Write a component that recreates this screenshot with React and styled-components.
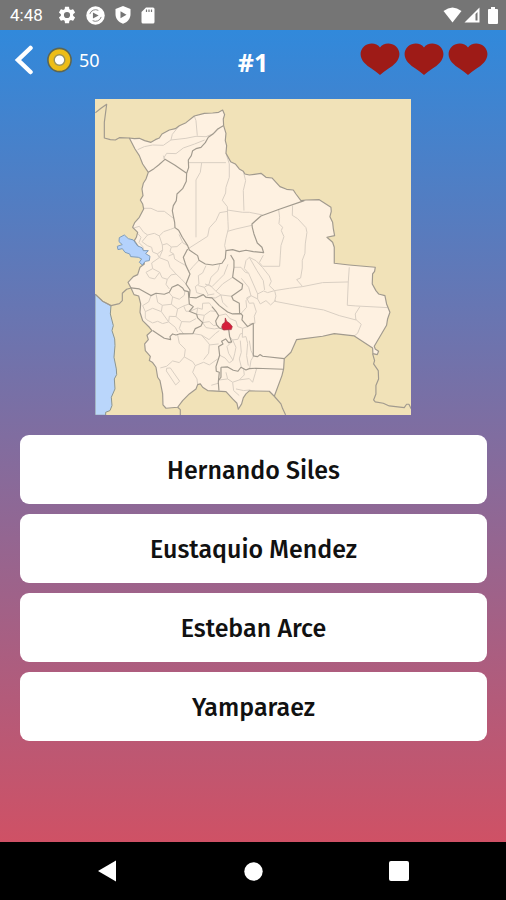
import React from "react";
import styled, { createGlobalStyle } from "styled-components";

const GlobalStyle = createGlobalStyle`
  *, *::before, *::after { box-sizing: border-box; }
  body { margin: 0; font-family: "Noto Sans", "Open Sans", sans-serif; }
  button { font: inherit; border: 0; padding: 0; background: none; cursor: pointer; }
  svg { display: block; }
`;

const Screen = styled.div`
  min-height: 100vh;
  display: flex;
  flex-direction: column;
  background: #000;
`;

const StatusBar = styled.header`
  height: 30px;
  padding: 0 8px 0 10px;
  display: flex;
  align-items: center;
  justify-content: space-between;
  background: #757575;
  color: #fff;
`;

const StatusGroup = styled.div`
  display: flex;
  align-items: center;
  gap: ${(p) => p.$gap}px;
`;

const Clock = styled.time`
  font: 400 17px/20px Roboto, sans-serif;
  margin-right: 5px;
`;

const Game = styled.main`
  flex: 1;
  display: flex;
  flex-direction: column;
  background: linear-gradient(#3189db, #cf5165);
`;

const TopBar = styled.div`
  height: 60px;
  padding: 0 14px;
  display: grid;
  grid-template-columns: 1fr auto 1fr;
  align-items: center;
  color: #fff;
`;

const Wallet = styled.div`
  display: flex;
  align-items: center;
  gap: 14px;
`;

const BackButton = styled.button`
  color: #fff;
`;

const Coins = styled.span`
  display: flex;
  align-items: center;
  gap: 7px;
  font-size: 18px;
  line-height: 24px;
`;

const Level = styled.h1`
  margin: 0;
  padding-top: 3px;
  font-size: 25px;
  line-height: 32px;
  font-weight: 700;
`;

const Lives = styled.div`
  display: flex;
  justify-content: flex-end;
  gap: 4px;
  padding: 0 4px 2px 0;
`;

const MapFrame = styled.figure`
  width: 62.5%;
  margin: 9px auto 20px;

  svg { width: 100%; height: auto; }
`;

const Answers = styled.div`
  display: grid;
  gap: 10px;
  padding: 0 19px 100px 20px;
`;

const Answer = styled.button`
  && {
    height: 69px;
    padding-top: 3px;
    border-radius: 9px;
    background: #fff;
    color: #111;
    font: 500 25px/32px "Fira Sans", "Noto Sans", sans-serif;
  }
`;

const NavBar = styled.nav`
  height: 58px;
  padding: 0 34px;
  display: grid;
  grid-template-columns: repeat(3, 1fr);
  background: #000;
`;

const NavButton = styled.button`
  && {
    display: grid;
    place-items: center;
    color: #fff;
  }
`;

const Heart = () => (
  <svg width="40" height="33" viewBox="0 0 40 33" aria-hidden="true">
    <path fill="#9e1b17" d="M20 4.500C17-.2 9-.9 4.200 3.200C-.7 7.500-.5 14.500 4 19.500C8.500 24.500 15 27.300 20 32C25 27.300 31.500 24.500 36 19.500C40.500 14.500 40.700 7.500 35.800 3.200C31-.9 23-.2 20 4.500Z" />
  </svg>
);

const Coin = () => (
  <svg width="25" height="26" viewBox="0 0 25 26" aria-hidden="true">
    <circle cx="12.500" cy="13" r="11.600" fill="#edbd17" stroke="#5c6654" strokeWidth="1.600" />
    <circle cx="12.500" cy="13" r="5.300" fill="#fff" stroke="#98925c" strokeWidth="1.400" />
  </svg>
);

const Gear = () => (
  <svg width="18" height="18" viewBox="1.500 1.500 21 21" fill="currentColor" aria-hidden="true">
    <path d="M19.140 12.940c.04-.3.060-.61.060-.94s-.02-.64-.07-.94l2.030-1.580a.49.49 0 0 0 .12-.61l-1.920-3.320a.49.49 0 0 0-.59-.22l-2.390.96a7 7 0 0 0-1.620-.94l-.36-2.540A.48.48 0 0 0 13.920 2.400h-3.840c-.24 0-.43.170-.47.410l-.36 2.540c-.59.240-1.130.57-1.620.94l-2.390-.96a.48.48 0 0 0-.59.220L2.740 8.870a.48.48 0 0 0 .12.610l2.030 1.580a7 7 0 0 0 0 1.880l-2.030 1.580a.49.49 0 0 0-.12.610l1.920 3.320c.12.220.37.290.59.220l2.390-.96c.5.380 1.030.7 1.620.94l.36 2.540c.05.240.24.410.48.410h3.840c.24 0 .44-.17.470-.41l.36-2.540a7 7 0 0 0 1.620-.94l2.390.96c.22.080.47 0 .59-.22l1.920-3.320a.48.48 0 0 0-.12-.61zM12 15.600a3.600 3.600 0 1 1 0-7.200 3.600 3.600 0 0 1 0 7.200z" />
  </svg>
);

const PlayDisc = () => (
  <svg width="19" height="19" viewBox="0 0 20 20" aria-hidden="true">
    <circle cx="10" cy="10" r="9.700" fill="#fff" />
    <path d="M4 8.500A6.300 6.300 0 0 1 13 4.600M16 11.500A6.300 6.300 0 0 1 7 15.400" fill="none" stroke="#858585" strokeWidth="1" />
    <path d="M7.300 6.800L13.300 10L7.300 13.200Z" fill="#757575" />
  </svg>
);

const Shield = () => (
  <svg width="16" height="18" viewBox="0 0 16 18" aria-hidden="true">
    <path d="M8 0L15.500 3V8C15.500 12.600 12.600 16.200 8 17.700C3.400 16.200.5 12.600.5 8V3Z" fill="#fff" />
    <path d="M5.500 5.200L11.500 8.700L5.500 12.200Z" fill="#757575" />
  </svg>
);

const SdCard = () => (
  <svg width="14" height="17" viewBox="0 0 14 17" aria-hidden="true">
    <path d="M5 .5H12Q13.500.5 13.500 2V15Q13.500 16.500 12 16.500H2Q.5 16.500.5 15V5Z" fill="#fff" />
    <path d="M5.500 2.500V5M8 2.500V5M10.500 2.500V5" stroke="#757575" strokeWidth="1.200" />
  </svg>
);

const Wifi = () => (
  <svg width="19" height="16" viewBox="0 0 19 16" aria-hidden="true">
    <path d="M.5 4Q9.500-3 18.500 4L9.500 15.500Z" fill="#fff" />
  </svg>
);

const Signal = () => (
  <svg width="16" height="16" viewBox="0 0 16 16" aria-hidden="true">
    <path d="M15.500.5V15.500H.5Z" fill="#fff" />
    <path d="M13.500 5V13.500H11.500V7Z" fill="#757575" />
  </svg>
);

const Battery = () => (
  <svg width="10" height="17" viewBox="0 0 10 17" aria-hidden="true">
    <path d="M3 0H7V2H9Q10 2 10 3V16Q10 17 9 17H1Q0 17 0 16V3Q0 2 1 2H3Z" fill="#fff" />
  </svg>
);

const COUNTRY =
  "M120 132L135 134L150 133L166 140L185 145L198 137L210 132L218 120L240 108L258 104L270 95L290 86L315 66L345 58L370 57L388 55L400 48L406 62L402 75L403 95L410 118L408 140L412 155L410 178L424 203L438 210L450 225L462 232L467 240L480 243L495 241L515 238L530 250L548 252L572 278L592 286L612 288L620 300L635 320L650 318L690 317L725 340L726 352L722 368L730 385L732 403L736 425L713 430L730 445L735 460V508L780 513L858 520L856 532L850 540L849 570L860 590L868 600L887 605L892 630L902 655L895 675L892 694L855 757L858 765L868 772L864 782L851 779L850 762L795 726L735 719L700 727L622 737L605 775L585 794L583 825L578 845L555 907L540 892L480 891L470 900L462 912L457 930L447 946L443 928L430 915L410 893L355 890L340 880L333 870L325 872L320 885L300 900L280 920L265 940L230 943L221 933L220 900L212 860L205 850L200 820L190 806L180 800L183 787L168 770L166 750L177 737L173 724L188 710L180 700L160 680L152 655L154 630L148 606L134 602L125 582L116 565L132 548L145 542L152 520L165 510L158 480L145 455L135 440L141 430L145 415L130 400L136 386L150 370L163 345L160 330L153 318L161 305L158 285L162 268L170 255L177 235L160 210L150 185L137 165Z";

const NEIGHBOURS = [
  "M18 56L35 43L52 31L45 85V132L63 137L78 138L90 131L120 132",
  "M18 601L40 622L65 635L90 629L99 620V598L112 586L125 582",
  "M850 779L856 800L853 810L867 830L868 855L860 875V900L853 918L858 924L882 928L900 936L945 941L952 931L959 931L966 945",
  "M555 907L575 930L580 944L589 963",
  "M265 940L273 947V963",
];

const DEPARTMENTS = [
  "M177 235L194 224L208 213L227 196L256 213L292 238",
  "M402 95L384 106L370 121L357 130L348 146L335 160L320 164L310 170L306 185L297 198L298 221L292 238L291 262L280 284L263 300L261 320L252 335L249 350L252 366L256 385L257 401L268 409L279 430L295 455L300 468L325 485L329 499L348 510L370 513L398 508L408 493L410 470L430 467L450 473L470 469L492 473L523 476L518 460L504 447L494 420L489 400L488 390L515 366L570 346L645 320",
  "M295 465L282 490L290 515L302 540L290 570L302 588L300 610L320 612L342 602L350 610L368 612L390 635L415 654L430 660L455 659L460 665L458 678L475 698L492 688V786L505 788L512 782L520 787L585 794",
  "M424 483L434 500V520L430 550L460 571L458 585L427 607L432 618L450 628L451 659",
  "M125 582L150 585L185 605L200 598L225 601L240 595L248 580L266 572L280 582L285 590L297 593L300 630L312 638L300 652L322 661L325 672L340 686L335 696L318 704L311 719L270 720L260 723L250 720L242 728L244 737L225 733L210 723L190 710",
  "M368 638L380 652L388 665L379 681L382 693L390 702L405 707L418 705L421 728L427 744L418 746L409 735L397 742L401 750L388 758L391 784L380 818L381 832L390 835L387 865L389 890",
  "M395 820L415 819L432 829L446 832L455 820L470 828L480 824L500 823L583 826",
  "M395 820V850L387 860",
];

const PROVINCES = [
  "M145 167L165 158L190 153L222 154L245 138L290 133L320 127L350 128L375 118L390 102",
  "M245 138L249 121L270 95M315 66L320 80L324 125M222 194L232 178L260 179L282 162L316 150L346 138M227 196L222 185",
  "M297 206H410M337 207L333 235L320 258V430M410 178L420 210V250L410 280L409 297L399 319L414 338L416 383L417 405L410 433L406 455L410 470",
  "M462 232L469 260L462 290L464 350M413 348L460 355L480 355L520 363M416 352L391 356L380 380L360 402L355 427L297 464M415 412L440 405L488 394",
  "M163 343L185 343L205 352H225L255 375M130 403L150 397L163 415L175 423L195 418L210 426L223 413L244 406L257 401M145 418L155 430L149 446L160 457L164 471M175 423L158 443L174 455L187 460L190 474L204 480L220 468L219 453L233 449L246 459L263 458L277 446M220 468L210 491L187 507L190 524L211 535L218 551L234 556L245 543L260 540L275 554L290 570M246 459L242 473L253 480L256 495L270 504L290 515M210 491L236 501L242 520L260 540M190 524L170 535L180 551L196 555L211 535M234 556L230 571L240 585M253 480L238 486M204 480L210 491M295 455L281 447L269 421M219 453L210 426",
  "M568 346L571 370L569 389L580 400L576 410L584 428L575 455L573 486L571 517H520L510 506L522 484M610 335L609 364L625 374L650 401L653 415L648 450L647 478L639 499V522L634 552L622 557L640 578L700 566L777 564",
  "M780 520L777 564L774 634L800 636L895 641M640 578L600 583L556 590L560 606L556 622L640 638L703 648L750 665L800 678L798 660L812 638M798 675L816 691L805 718L795 726",
  "M480 490L500 500L520 521L540 546L546 562L540 575L556 590L535 596L523 591L505 600V615L513 630L530 620L544 633L560 618M505 600L492 570L478 538L465 524L470 500L480 490L503 530L522 560L526 588M505 615L485 605L472 612L480 628L493 627L501 653L495 667L497 688L480 690M434 520L455 520L468 535L478 538M456 553L478 580L485 605L470 620L472 640L455 659",
  "M350 515L340 537L327 545L329 570L318 578L322 596L342 602M329 499L311 518L301 530M347 570L368 578L390 556L404 542L416 511M327 575L345 580L359 571L380 592L395 603L400 625L415 640M359 571L365 550L386 530L392 509M380 592L400 570L430 550M395 603L427 607M345 580L357 603L375 600M357 603L350 611L378 612L395 603",
  "M185 605L178 624L160 635L168 653L190 643L216 653L219 634L205 625L200 599M219 634L246 631L250 609L240 597M250 609L270 616L285 604L287 590M246 631L265 645L283 636L300 630M265 645L260 668L240 667L238 684L220 689L205 682L190 687L173 678M216 653L238 684L258 700L265 714M260 668L277 683L302 684L320 674M277 683L270 704L283 720M168 653V672L173 678M283 636L290 652L302 652",
  "M302 652L325 642L339 646L340 628L360 627L368 638M325 642L322 661L345 664L363 651L380 652M345 664L340 686L360 683L373 695L382 693M340 686L350 701L375 705L390 702M311 719L336 723L359 737L378 719L390 710M336 723L357 747L361 753L388 750M265 723L270 748L288 766L285 789L270 806L250 801L232 817L213 822M285 789L310 803L318 815L343 805L360 813L385 795M318 815L310 835L323 855L325 872M232 823L243 822L271 862L259 873L231 831Z M360 753L358 778L343 797M366 874L387 868",
  "M388 665L410 660L422 674L440 681L445 698L460 703L459 730L470 728L475 748L472 785L477 815M421 728L430 738L446 736L453 720L460 718M430 738L440 760L436 780L431 799L420 807L407 792L391 784M453 740L456 775L450 795L456 819M427 744L413 758L418 778L431 799M475 698L460 703M480 740L485 770L493 786L485 800L481 825",
  "M410 835L415 855L391 858M415 855L430 865L433 890L450 905M430 865L450 858L480 854L490 865L498 838L502 824M450 858L465 843L463 826M440 885L463 890L483 888",
];

const BoliviaMap = () => (
  <svg viewBox="17 15 949 949" role="img" aria-label="Map of the provinces of Bolivia with one province highlighted in red">
    <rect x="17" y="15" width="949" height="949" fill="#f1e2b8" />
    <path d="M17 601L40 622L65 635L63 660L72 695L68 710L76 735L77 755L74 790L81 825L82 842L75 855L77 885L66 910L68 935L62 950L49 955V964H17Z" fill="#bad6fb" stroke="#8c958f" strokeWidth="3" />
    <path d={COUNTRY} fill="#fef1e1" />
    <g fill="none" stroke="#d9cfc3" strokeWidth="3" strokeLinejoin="round">
      {PROVINCES.map((d) => <path key={d} d={d} />)}
    </g>
    <g fill="none" stroke="#a19a8e" strokeWidth="3.500" strokeLinejoin="round">
      <path d={COUNTRY} />
      {NEIGHBOURS.map((d) => <path key={d} d={d} />)}
      {DEPARTMENTS.map((d) => <path key={d} d={d} />)}
    </g>
    <path d="M90 431L105 423L117 434L132 438L145 456L158 461L162 470L177 470L169 479L182 487L180 500L168 502L159 513L150 505L157 495L147 490L124 488L121 480L107 475L99 464L86 467L84 457L99 452L89 443Z" fill="#b4d2fc" stroke="#7f9dba" strokeWidth="3" />
    <path d="M408 672L412 682L421 688L429 698L426 707L402 708L397 700L400 690L407 685Z" fill="#d51f3b" stroke="#a43443" strokeWidth="2" />
  </svg>
);

const OPTIONS = ["Hernando Siles", "Eustaquio Mendez", "Esteban Arce", "Yamparaez"];

export default function App() {
  return (
    <>
      <GlobalStyle />
      <Screen>
        <StatusBar>
          <StatusGroup $gap={10}>
            <Clock>4:48</Clock>
            <Gear />
            <PlayDisc />
            <Shield />
            <SdCard />
          </StatusGroup>
          <StatusGroup $gap={8}>
            <StatusGroup $gap={2}>
              <Wifi />
              <Signal />
            </StatusGroup>
            <Battery />
          </StatusGroup>
        </StatusBar>
        <Game>
          <TopBar>
            <Wallet>
              <BackButton type="button" aria-label="Back">
                <svg width="19" height="30" viewBox="0 0 19 30" aria-hidden="true">
                  <path d="M16.500 3L4 15L16.500 27" fill="none" stroke="currentColor" strokeWidth="4.500" strokeLinecap="round" />
                </svg>
              </BackButton>
              <Coins><Coin />50</Coins>
            </Wallet>
            <Level>#1</Level>
            <Lives role="img" aria-label="3 lives left">
              <Heart />
              <Heart />
              <Heart />
            </Lives>
          </TopBar>
          <MapFrame>
            <BoliviaMap />
          </MapFrame>
          <Answers>
            {OPTIONS.map((name) => (
              <Answer key={name} type="button">{name}</Answer>
            ))}
          </Answers>
        </Game>
        <NavBar>
          <NavButton type="button" aria-label="Back">
            <svg width="18" height="22" viewBox="0 0 18 22" aria-hidden="true"><path d="M18 .5V21.500L0 11Z" fill="#fff" /></svg>
          </NavButton>
          <NavButton type="button" aria-label="Home">
            <svg width="19" height="19" viewBox="0 0 19 19" aria-hidden="true"><circle cx="9.500" cy="9.500" r="9.200" fill="#fff" /></svg>
          </NavButton>
          <NavButton type="button" aria-label="Recent apps">
            <svg width="20" height="20" viewBox="0 0 20 20" aria-hidden="true"><rect width="20" height="20" rx="2" fill="#fff" /></svg>
          </NavButton>
        </NavBar>
      </Screen>
    </>
  );
}
